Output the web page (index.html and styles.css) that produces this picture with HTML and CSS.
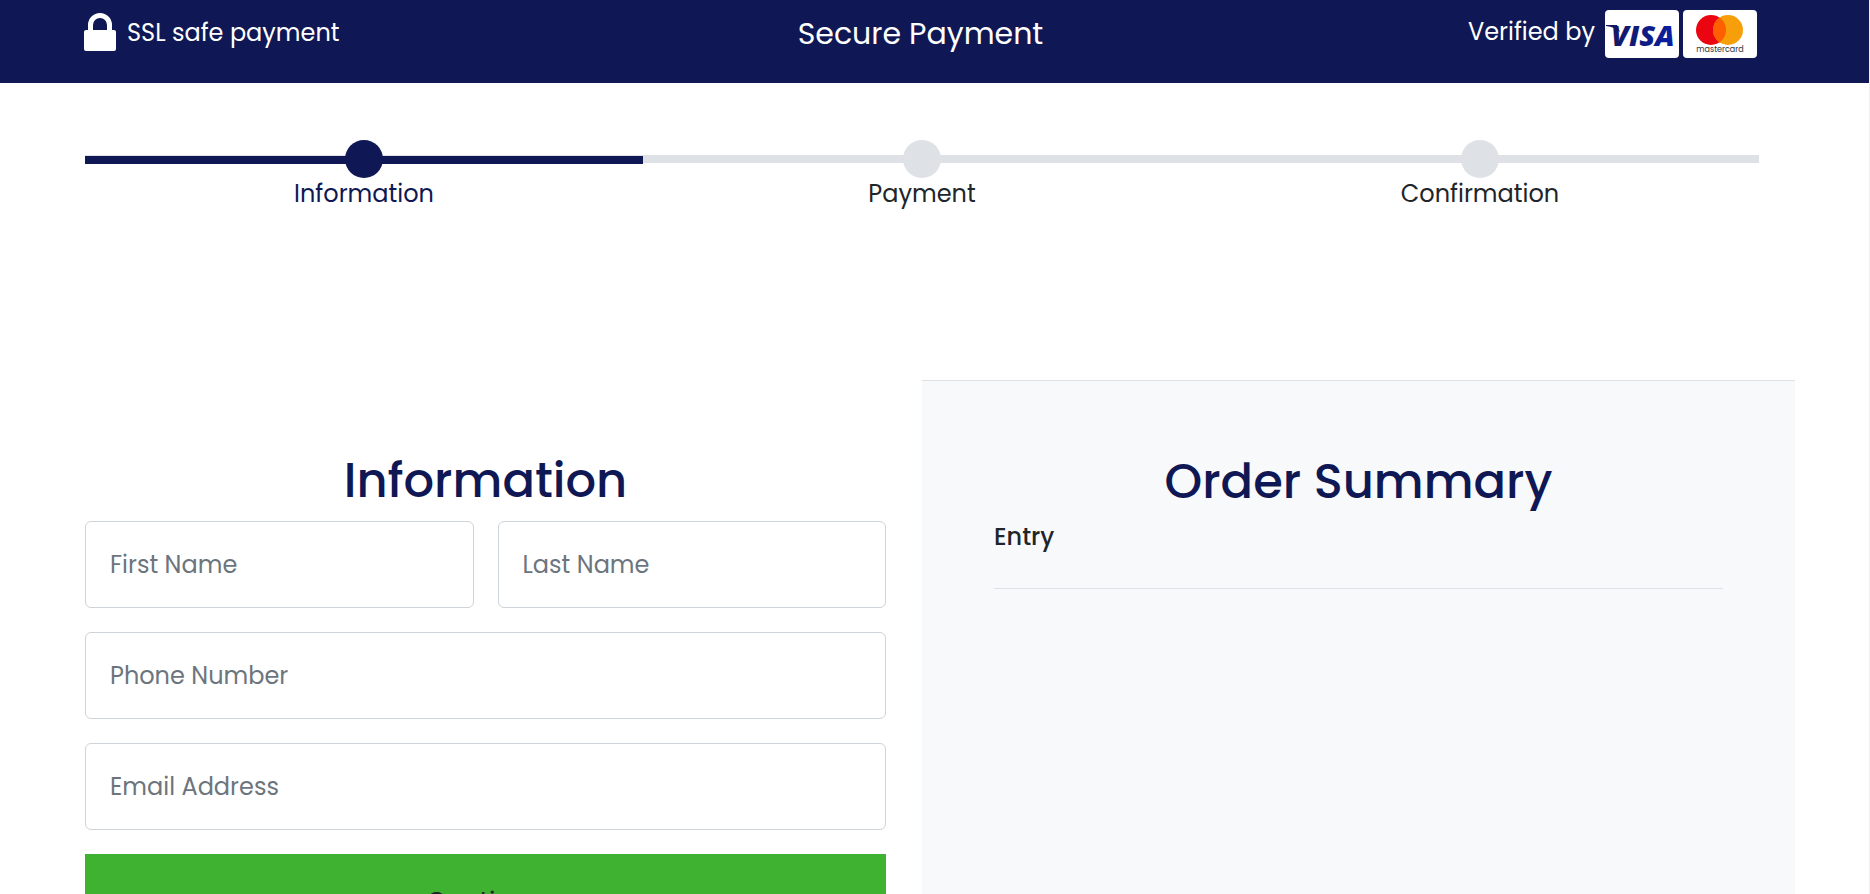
FILE: index.html
```html
<!DOCTYPE html>
<html lang="en">
<head>
  <meta charset="UTF-8" />
  <meta name="viewport" content="width=device-width, initial-scale=1.0"/>
  <title>Secure Payment</title>
  <link rel="stylesheet" href="styles.css">
</head>
<body>

  <header class="top-bar">
    <div class="ssl">
      <svg class="lock" viewBox="0 0 32 38" aria-hidden="true">
        <path fill="#fff" fill-rule="evenodd" d="M4 17V12a12 12 0 0 1 24 0v5h2a2 2 0 0 1 2 2v17a2 2 0 0 1-2 2H2a2 2 0 0 1-2-2V19a2 2 0 0 1 2-2zM9 17h14v-5a7 7 0 0 0-14 0z"/>
      </svg>
      <span>SSL safe payment</span>
    </div>
    <div class="title">Secure Payment</div>
    <div class="verified">
      <span>Verified by</span>
      <div class="cards">
        <svg class="card" viewBox="0 0 74 48" role="img" aria-label="Visa">
          <defs>
            <linearGradient id="visaBlue" x1="0" x2="1">
              <stop offset="0" stop-color="#16185f"/>
              <stop offset="1" stop-color="#0a1fa5"/>
            </linearGradient>
          </defs>
          <rect width="74" height="48" rx="4" fill="#fff"/>
          <text class="visa-text" x="6" y="36" fill="url(#visaBlue)">VISA</text>
          <path d="M1 15h11l3 7q-5-5-14-6z" fill="#16185f"/>
        </svg>
        <svg class="card" viewBox="0 0 74 48" role="img" aria-label="Mastercard">
          <rect width="74" height="48" rx="4" fill="#fff"/>
          <circle cx="28" cy="20" r="15" fill="#eb0510"/>
          <circle cx="45" cy="20" r="15" fill="#f79e0b"/>
          <path d="M36.5 7.600a15 15 0 0 1 0 24.8a15 15 0 0 1 0-24.8z" fill="#ff5f00"/>
          <text class="mc-text" x="37" y="42" text-anchor="middle">mastercard</text>
        </svg>
      </div>
    </div>
  </header>

  <ol class="steps">
    <li class="step active"><span class="dot"></span>Information</li>
    <li class="step"><span class="dot"></span>Payment</li>
    <li class="step"><span class="dot"></span>Confirmation</li>
  </ol>

  <main class="checkout">
    <form class="info">
      <h1>Information</h1>
      <div class="fields">
        <input type="text" aria-label="First Name" placeholder="First Name">
        <input type="text" aria-label="Last Name" placeholder="Last Name">
        <input class="wide" type="tel" aria-label="Phone Number" placeholder="Phone Number">
        <input class="wide" type="email" aria-label="Email Address" placeholder="Email Address">
        <button class="wide" type="submit">Continue</button>
      </div>
    </form>

    <section class="summary">
      <h1>Order Summary</h1>
      <div class="entry">Entry</div>
    </section>
  </main>

</body>
</html>
```

FILE: styles.css
```css
* {
  box-sizing: border-box;
}

body {
  margin: 0;
  min-height: 100vh;
  border-right: 1px solid #eee;
  background: #fff;
  color: #212529;
  font-family: Poppins, Inter, sans-serif;
  font-size: 24px;
  line-height: 36px;
}

/* header */
.top-bar {
  display: grid;
  grid-template-columns: 1fr auto 1fr;
  align-items: start;
  height: 83px;
  padding: 10px 112px 0 84px;
  background: #0f1854;
  color: #fff;
}

.ssl {
  display: flex;
  align-items: center;
  gap: 11px;
  padding-top: 3px;
}

.ssl span {
  padding-top: 2px;
}

.lock {
  width: 32px;
  height: 38px;
}

.title {
  padding-top: 6px;
  font-size: 30px;
}

.verified {
  display: flex;
  justify-content: flex-end;
  gap: 10px;
}

.verified span {
  padding-top: 4px;
}

.cards {
  display: flex;
  gap: 4px;
}

.card {
  width: 74px;
  height: 48px;
}

.visa-text {
  font-family: "Open Sans", sans-serif;
  font-size: 29px;
  font-style: italic;
  font-weight: 800;
}

.mc-text {
  fill: #333;
  font-size: 8px;
}

/* progress steps */
.steps {
  display: grid;
  grid-template-columns: repeat(3, 1fr);
  margin: 0;
  padding: 57px 110px 0 85px;
  list-style: none;
}

.step {
  position: relative;
  display: flex;
  flex-direction: column;
  align-items: center;
}

.step::before {
  content: "";
  position: absolute;
  top: 15px;
  left: 0;
  width: 100%;
  height: 8px;
  background: #dee2e6;
}

.dot {
  position: relative;
  width: 38px;
  height: 38px;
  margin-bottom: -2px;
  border-radius: 50%;
  background: #dee2e6;
}

.step.active {
  color: #0f1854;
}

.step.active::before {
  border-top: 1px solid #dee2e6;
  background: #0f1854;
}

.step.active .dot {
  background: #0f1854;
}

/* form and summary */
.checkout {
  display: grid;
  grid-template-columns: 1fr 1fr;
  margin-top: 168px;
  padding: 0 74px 0 49px;
}

.info {
  padding: 72px 36px;
}

h1 {
  margin: 0 0 12px;
  color: #0f1854;
  font-size: 48px;
  font-weight: 500;
  line-height: 57px;
  text-align: center;
}

.fields {
  display: grid;
  grid-template-columns: 1fr 1fr;
  gap: 24px;
}

.wide {
  grid-column: 1 / -1;
}

input {
  width: 100%;
  height: 87px;
  padding: 0 24px;
  border: 1px solid #ced4da;
  border-radius: 6px;
  background: #fff;
  color: #212529;
  font: inherit;
}

input::placeholder {
  color: #6c757d;
  opacity: 1;
}

button {
  height: 96px;
  border: 0;
  background: #40b231;
  color: #212529;
  font: inherit;
  font-size: 26px;
  cursor: pointer;
}

.summary {
  padding: 72px;
  border-top: 1px solid #dee2e6;
  background: #f8f9fb;
}

.summary h1 {
  margin-bottom: 9px;
}

.entry {
  padding-bottom: 33px;
  border-bottom: 1px solid #dee2e6;
  font-weight: 500;
}
```
